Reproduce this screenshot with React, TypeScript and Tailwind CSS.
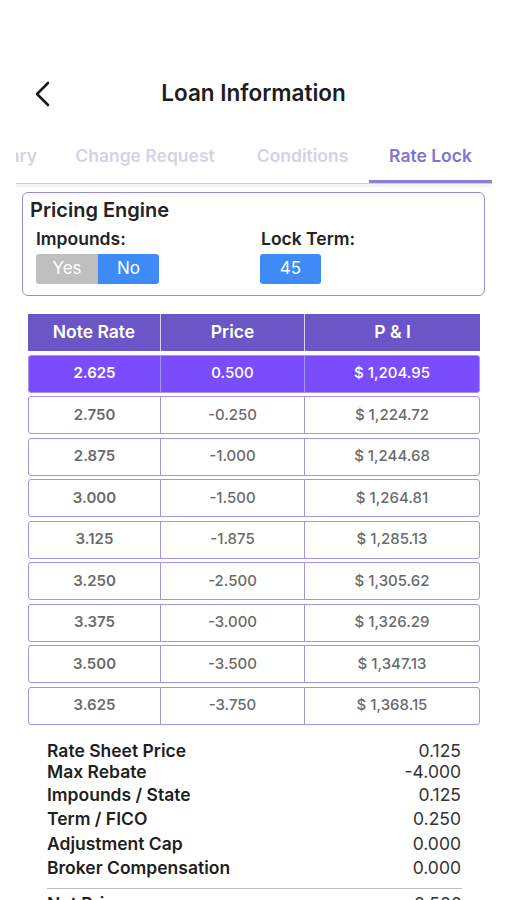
const font = { fontFamily: 'Inter, "Noto Sans", sans-serif' };

interface RateRow {
    rate: string;
    price: string;
    pi: string;
}

const rows: RateRow[] = [
    { rate: '2.625', price: '0.500', pi: '$ 1,204.95' },
    { rate: '2.750', price: '-0.250', pi: '$ 1,224.72' },
    { rate: '2.875', price: '-1.000', pi: '$ 1,244.68' },
    { rate: '3.000', price: '-1.500', pi: '$ 1,264.81' },
    { rate: '3.125', price: '-1.875', pi: '$ 1,285.13' },
    { rate: '3.250', price: '-2.500', pi: '$ 1,305.62' },
    { rate: '3.375', price: '-3.000', pi: '$ 1,326.29' },
    { rate: '3.500', price: '-3.500', pi: '$ 1,347.13' },
    { rate: '3.625', price: '-3.750', pi: '$ 1,368.15' },
];

const summary = [
    { label: 'Rate Sheet Price', value: '0.125', h: 'h-[21px]' },
    { label: 'Max Rebate', value: '-4.000', h: 'h-[22px]' },
    { label: 'Impounds / State', value: '0.125', h: 'h-[24px]' },
    { label: 'Term / FICO', value: '0.250', h: 'h-[24px]' },
    { label: 'Adjustment Cap', value: '0.000', h: 'h-[25px]' },
    { label: 'Broker Compensation', value: '0.000', h: 'h-[24px]' },
];

const tabs = [
    { label: 'Summary', w: 'w-[115px]' },
    { label: 'Change Request', w: 'w-[182px]' },
    { label: 'Conditions', w: 'w-[133px]' },
    { label: 'Rate Lock', w: 'w-[123px]', active: true },
];

export default function App() {
    return (
        <div className="w-[507px] h-[900px] overflow-hidden bg-white" style={font}>
            {/* header */}
            <div className="relative mt-[72px] h-[42px] flex items-center justify-center">
                <svg className="absolute left-[33px] top-[9px]" width="20" height="26" viewBox="0 0 20 26" fill="none">
                    <path d="M15 2 L4 13 L15 24" stroke="#1a1a1a" strokeWidth="2.6" strokeLinecap="round" strokeLinejoin="round" />
                </svg>
                <h1 className="text-[22.5px] font-semibold text-[#1c1c1c]">Loan Information</h1>
            </div>

            {/* tabs */}
            <div className="mt-[21px] mx-[16px] w-[476px]">
                <div className="flex justify-end overflow-hidden">
                    {tabs.map((t) => (
                        <div
                            key={t.label}
                            className={`${t.w} shrink-0 h-[48px] pb-[3px] flex items-center justify-center text-[17.5px] font-semibold border-b-[3px] ${
                                t.active ? 'text-[#8474d4] border-[#8c7fd8]' : 'text-[#d3d3e3] border-transparent'
                            }`}
                        >
                            {t.label}
                        </div>
                    ))}
                </div>
                <div className="h-px bg-[#cfcfcf] shadow-[0_2px_3px_rgba(0,0,0,0.18)]" />
            </div>

            {/* pricing engine */}
            <div className="mt-[8px] mx-[22px] h-[104px] border-[1.5px] border-[#9a8de0] rounded-[6px] px-[7px] pt-[5px]">
                <div className="text-[20px] font-semibold text-[#222] leading-[25px]">Pricing Engine</div>
                <div className="flex mt-[5px]">
                    <div className="w-[230px] pl-[6px]">
                        <div className="text-[17.5px] font-semibold text-[#222] leading-[21px]">Impounds:</div>
                        <div className="mt-[5px] flex h-[30px] w-[123px] rounded-[3px] overflow-hidden text-[17px]">
                            <div className="w-[62px] bg-[#bfbfbf] text-white flex items-center justify-center">Yes</div>
                            <div className="w-[61px] bg-[#3e8bf8] text-white flex items-center justify-center">No</div>
                        </div>
                    </div>
                    <div>
                        <div className="text-[17.5px] font-semibold text-[#222] leading-[21px] pl-px">Lock Term:</div>
                        <div className="mt-[5px] h-[30px] w-[61px] rounded-[3px] bg-[#3e8bf8] text-white text-[17px] flex items-center justify-center">
                            45
                        </div>
                    </div>
                </div>
            </div>

            {/* rate table */}
            <div className="mt-[18px] ml-[28px] w-[452px] flex flex-col gap-[3.5px]">
                <div className="h-[37px] flex bg-[#6a56c6] text-white text-[17.5px] font-semibold">
                    <div className="w-[133px] flex items-center justify-center border-r border-[#d9d2f4]">Note Rate</div>
                    <div className="w-[144px] flex items-center justify-center border-r border-[#d9d2f4]">Price</div>
                    <div className="flex-1 flex items-center justify-center">P &amp; I</div>
                </div>
                {rows.map((r, i) => {
                    const selected = i === 0;
                    return (
                        <div
                            key={r.rate}
                            className={`h-[38px] flex rounded-[3px] border-[1.5px] border-[#a493e9] text-[15px] ${
                                selected ? 'bg-[#7b4cfb] text-white' : 'bg-white text-[#6b6b6b]'
                            }`}
                        >
                            <div className="w-[132px] flex items-center justify-center font-semibold border-r-[1.5px] border-[#a493e9]">
                                {r.rate}
                            </div>
                            <div className="w-[144px] flex items-center justify-center font-medium border-r-[1.5px] border-[#a493e9]">
                                {r.price}
                            </div>
                            <div className="flex-1 flex items-center justify-center font-medium">{r.pi}</div>
                        </div>
                    );
                })}
            </div>

            {/* summary */}
            <div className="mt-[16px] ml-[47px] w-[415px]">
                {summary.map((s) => (
                    <div key={s.label} className={`${s.h} flex items-center justify-between text-[17.5px]`}>
                        <span className="font-semibold text-[#1f1f1f]">{s.label}</span>
                        <span className="text-[#333] pr-[1px]">{s.value}</span>
                    </div>
                ))}
                <div className="mt-[7px] border-t border-[#bdbdbd]" />
                <div className="mt-[4px] h-[24px] flex items-center justify-between text-[17.5px]">
                    <span className="font-semibold text-[#1f1f1f]">Net Price</span>
                    <span className="text-[#333]">0.500</span>
                </div>
            </div>
        </div>
    );
}
